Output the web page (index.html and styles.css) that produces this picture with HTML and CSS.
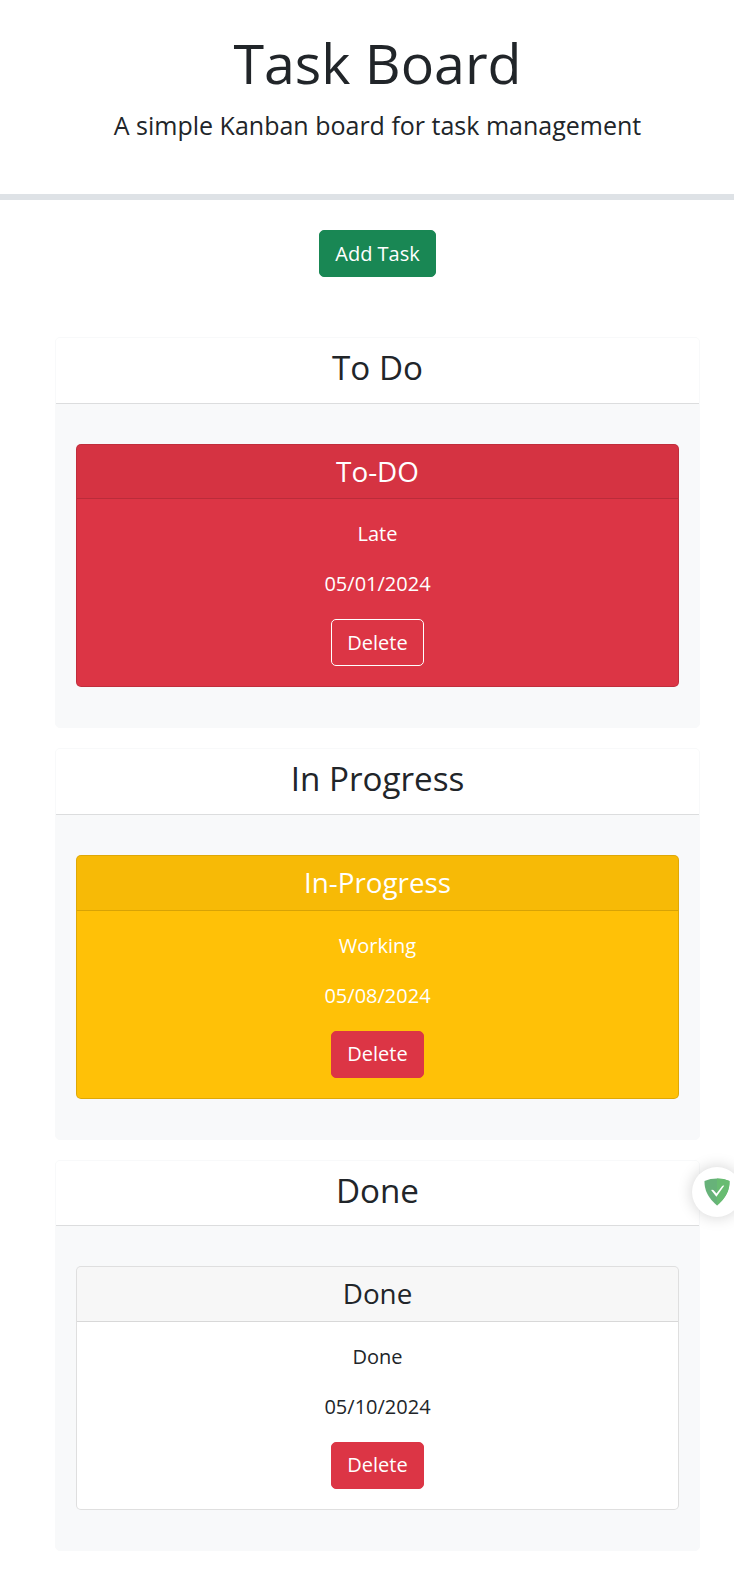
FILE: index.html
```html
<!DOCTYPE html>
<html lang="en">
<head>
<meta charset="utf-8">
<title>Task Board</title>
<link rel="stylesheet" href="styles.css">
</head>
<body>
<div class="page">
  <header class="hero">
    <h1 class="hero-title">Task Board</h1>
    <p class="hero-lead">A simple Kanban board for task management</p>
  </header>
  <div class="actions"><button class="btn btn-success">Add Task</button></div>
  <main class="board">
    <section class="lane">
      <div class="lane-header"><h2>To Do</h2></div>
      <div class="lane-body">
        <article class="task task-late">
          <h4 class="task-header">To-DO</h4>
          <div class="task-body">
            <p>Late</p>
            <p>05/01/2024</p>
            <button class="btn btn-danger btn-outlined">Delete</button>
          </div>
        </article>
      </div>
    </section>
    <section class="lane">
      <div class="lane-header"><h2>In Progress</h2></div>
      <div class="lane-body">
        <article class="task task-today">
          <h4 class="task-header">In-Progress</h4>
          <div class="task-body">
            <p>Working</p>
            <p>05/08/2024</p>
            <button class="btn btn-danger">Delete</button>
          </div>
        </article>
      </div>
    </section>
    <section class="lane">
      <div class="lane-header"><h2>Done</h2></div>
      <div class="lane-body">
        <article class="task">
          <h4 class="task-header">Done</h4>
          <div class="task-body">
            <p>Done</p>
            <p>05/10/2024</p>
            <button class="btn btn-danger">Delete</button>
          </div>
        </article>
      </div>
    </section>
  </main>
  <div class="guard">
    <svg width="26" height="28" viewBox="0 0 26 28">
      <path fill="#67b279" d="M13 .5C9 .5 4.100 1.200.5 3.100c0 4.100 0 14.200 12.500 24.400C25.500 17.300 25.500 7.200 25.500 3.100 21.900 1.200 17 .5 13 .5z"/>
      <path fill="#68bc71" d="M13 .5v27C25.500 17.300 25.500 7.200 25.500 3.100 21.900 1.200 17 .5 13 .5z"/>
      <path fill="#fff" d="M12.400 18.700 7.200 12.200c.8-.8 1.800-.5 2.400.1l2.900 3.200L18 8.200c.6-.7 1.500-.9 2.200-.4z"/>
    </svg>
  </div>
</div>
</body>
</html>
```
FILE: styles.css
```css
* { box-sizing: border-box; }
html, body { margin: 0; overflow: hidden; }
body {
  background: #fff;
  color: #212529;
  font: 400 20px/1.5 "Open Sans", sans-serif;
}
h1, h2, h4, p { margin: 0; }
.page { position: relative; width: 755px; height: 1570px; text-align: center; }
.hero { height: 200px; padding-top: 29px; border-bottom: 6px solid #dee2e6; }
.hero-title { font-size: 55.5px; font-weight: 400; line-height: 67px; margin-bottom: 11px; }
.hero-lead { font-size: 25px; font-weight: 400; line-height: 37.5px; }
.actions { padding: 30px 0 60px; height: 137px; }
.btn {
  display: block;
  width: max-content;
  height: 47px;
  margin: 0 auto;
  padding: 7.5px 15px;
  border: 1px solid transparent;
  border-radius: 5px;
  color: #fff;
  font: inherit;
}
.btn-success { background: #198754; border-color: #198754; }
.btn-danger { background: #dc3545; border-color: #dc3545; }
.btn-outlined { border-color: #fff; }
.board { display: grid; gap: 20px; padding: 0 55px; }
.lane { height: 391.3px; border: 1px solid #f8f9fa; border-radius: 5px; background: #f8f9fa; }
.lane-header {
  height: 65.5px;
  padding-top: 10px;
  border-bottom: 1px solid #dcddde;
  border-radius: 4px 4px 0 0;
  background: #fff;
}
.lane-header h2 { font-size: 33.2px; font-weight: 400; line-height: 40px; }
.lane-body { padding: 40px 20px; }
.task { border: 1px solid rgba(0,0,0,.125); border-radius: 5px; background: #fff; }
.task-late { background: #dc3545; color: #fff; }
.task-today { background: #ffc107; color: #fff; }
.task-header {
  height: 54.8px;
  padding: 10px 0;
  border-bottom: 1px solid rgba(0,0,0,.125);
  border-radius: 4px 4px 0 0;
  background: rgba(0,0,0,.03);
  font-size: 27.8px;
  font-weight: 400;
  line-height: 33.4px;
}
.task-body { padding: 20px; }
.task-body p { margin-bottom: 20px; }
.guard {
  position: absolute;
  left: 692px;
  top: 1166.5px;
  display: flex;
  align-items: center;
  justify-content: center;
  width: 50px;
  height: 50px;
  border-radius: 50%;
  background: #fff;
  box-shadow: 0 0 15px rgba(0,0,0,.18);
}
```
